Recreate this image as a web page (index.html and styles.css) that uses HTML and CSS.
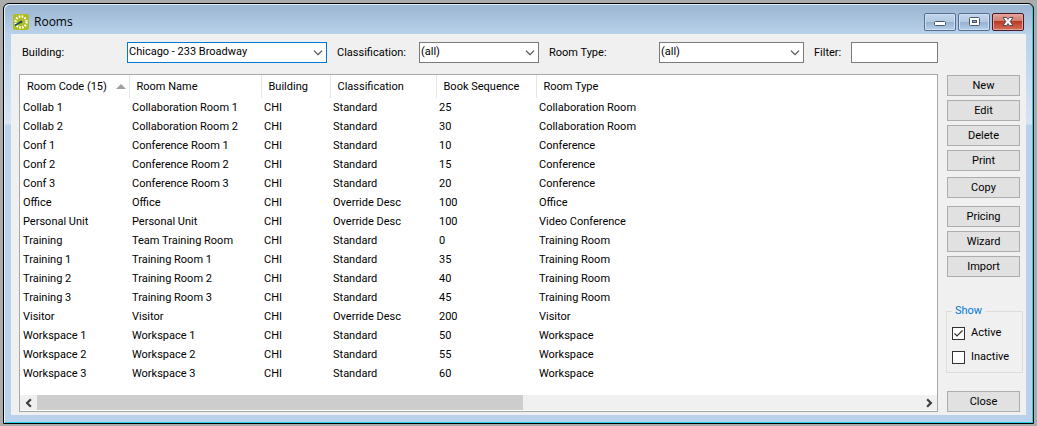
FILE: index.html
```html
<!DOCTYPE html>
<html lang="en">
<head>
<meta charset="utf-8">
<title>Rooms</title>
<link rel="stylesheet" href="styles.css">
</head>
<body>
<main class="window">
  <header class="titlebar">
    <svg class="app-icon" viewBox="0 0 16 16" aria-hidden="true">
      <rect width="16" height="16" rx="2" fill="#aebd24"/>
      <circle cx="8" cy="8" r="5.5" fill="none" stroke="#fff" stroke-width="2.4" stroke-dasharray="1.5 1.38"/>
      <path d="M2 11.5 8.5 7.5" stroke="#16505c" stroke-width="1.6"/>
      <circle cx="8" cy="8" r="1.3" fill="#16505c"/>
    </svg>
    <h1 class="title">Rooms</h1>
    <div class="window-buttons">
      <button class="win-btn" type="button" aria-label="Minimize">
        <svg viewBox="0 0 14 12"><rect x="1.5" y="5.5" width="11" height="4" rx="1" fill="#fff" stroke="#4c5665"/></svg>
      </button>
      <button class="win-btn" type="button" aria-label="Maximize">
        <svg viewBox="0 0 14 12"><rect x="2.5" y="1.5" width="10" height="8" rx="1" fill="#fff" stroke="#4c5665"/><rect x="5.5" y="4.5" width="4" height="2" fill="#8fadd0" stroke="#4c5665"/></svg>
      </button>
      <button class="win-btn win-close" type="button" aria-label="Close window">
        <svg viewBox="0 0 14 12"><path d="M2 1.5h3.5L7 3.4l1.500-1.900H12L9.200 5.500 12 9.500H8.500L7 7.600 5.500 9.500H2L4.800 5.500Z" fill="#fff" stroke="#4d4a58"/></svg>
      </button>
    </div>
  </header>
  <div class="client">
    <form class="filters">
      <label for="building">Building:</label>
      <select id="building" class="field field-active"><option>Chicago - 233 Broadway</option></select>
      <label for="classification">Classification:</label>
      <select id="classification" class="field"><option>(all)</option></select>
      <label for="roomtype" class="label-type">Room Type:</label>
      <select id="roomtype" class="field"><option>(all)</option></select>
      <label for="filter">Filter:</label>
      <input id="filter" class="field" type="text">
    </form>
    <section class="list">
      <table class="rooms">
        <colgroup><col class="c-code"><col class="c-name"><col class="c-building"><col class="c-class"><col class="c-seq"><col></colgroup>
        <thead><tr>
          <th><span class="sorted">Room Code (15)<svg class="sort" viewBox="0 0 10 5" aria-hidden="true"><path d="M0 5 5 0l5 5Z" fill="#a0a0a0"/></svg></span></th>
          <th>Room Name</th><th>Building</th><th>Classification</th><th>Book Sequence</th><th>Room Type</th>
        </tr></thead>
        <tbody>
          <tr><td>Collab 1</td><td>Collaboration Room 1</td><td>CHI</td><td>Standard</td><td>25</td><td>Collaboration Room</td></tr>
          <tr><td>Collab 2</td><td>Collaboration Room 2</td><td>CHI</td><td>Standard</td><td>30</td><td>Collaboration Room</td></tr>
          <tr><td>Conf 1</td><td>Conference Room 1</td><td>CHI</td><td>Standard</td><td>10</td><td>Conference</td></tr>
          <tr><td>Conf 2</td><td>Conference Room 2</td><td>CHI</td><td>Standard</td><td>15</td><td>Conference</td></tr>
          <tr><td>Conf 3</td><td>Conference Room 3</td><td>CHI</td><td>Standard</td><td>20</td><td>Conference</td></tr>
          <tr><td>Office</td><td>Office</td><td>CHI</td><td>Override Desc</td><td>100</td><td>Office</td></tr>
          <tr><td>Personal Unit</td><td>Personal Unit</td><td>CHI</td><td>Override Desc</td><td>100</td><td>Video Conference</td></tr>
          <tr><td>Training</td><td>Team Training Room</td><td>CHI</td><td>Standard</td><td>0</td><td>Training Room</td></tr>
          <tr><td>Training 1</td><td>Training Room 1</td><td>CHI</td><td>Standard</td><td>35</td><td>Training Room</td></tr>
          <tr><td>Training 2</td><td>Training Room 2</td><td>CHI</td><td>Standard</td><td>40</td><td>Training Room</td></tr>
          <tr><td>Training 3</td><td>Training Room 3</td><td>CHI</td><td>Standard</td><td>45</td><td>Training Room</td></tr>
          <tr><td>Visitor</td><td>Visitor</td><td>CHI</td><td>Override Desc</td><td>200</td><td>Visitor</td></tr>
          <tr><td>Workspace 1</td><td>Workspace 1</td><td>CHI</td><td>Standard</td><td>50</td><td>Workspace</td></tr>
          <tr><td>Workspace 2</td><td>Workspace 2</td><td>CHI</td><td>Standard</td><td>55</td><td>Workspace</td></tr>
          <tr><td>Workspace 3</td><td>Workspace 3</td><td>CHI</td><td>Standard</td><td>60</td><td>Workspace</td></tr>
        </tbody>
      </table>
      <div class="scrollbar">
        <button class="arrow" type="button" aria-label="Scroll left"><svg viewBox="0 0 8 8"><path d="M5.500 1 2.500 4l3 3" fill="none" stroke="#404040" stroke-width="1.8"/></svg></button>
        <div class="track"><div class="thumb"></div></div>
        <button class="arrow" type="button" aria-label="Scroll right"><svg viewBox="0 0 8 8"><path d="M2.500 1l3 3-3 3" fill="none" stroke="#404040" stroke-width="1.8"/></svg></button>
      </div>
    </section>
    <aside class="side">
      <div class="actions">
        <button class="btn" type="button">New</button>
        <button class="btn" type="button">Edit</button>
        <button class="btn" type="button">Delete</button>
        <button class="btn" type="button">Print</button>
      </div>
      <div class="actions">
        <button class="btn" type="button">Copy</button>
      </div>
      <div class="actions actions-tools">
        <button class="btn" type="button">Pricing</button>
        <button class="btn" type="button">Wizard</button>
        <button class="btn" type="button">Import</button>
      </div>
      <fieldset class="show">
        <legend>Show</legend>
        <label class="check"><input type="checkbox" checked>Active</label>
        <label class="check"><input type="checkbox">Inactive</label>
      </fieldset>
      <button class="btn" type="button">Close</button>
    </aside>
  </div>
</main>
</body>
</html>
```

FILE: styles.css
```css
* { box-sizing: border-box; }
body {
  margin: 0;
  min-height: 100vh;
  padding: 3px 3px 2px;
  display: flex;
  background: #ababab;
  font: 11px/14px Roboto, "Liberation Sans", sans-serif;
  color: #000;
}
button, input, select { font: inherit; color: inherit; }
.window {
  flex: 1;
  display: flex;
  flex-direction: column;
  padding: 0 7px 8px;
  border: 1px solid #000;
  border-radius: 6px 6px 0 0;
  background: linear-gradient(#99b4d1, #b9d1ea 30px, #d7e5f5 120px, #b9d1ea 121px);
  box-shadow: inset 1px 1px #e8f2fb, inset -1px -1px #22d3ee;
}
.titlebar {
  display: flex;
  align-items: center;
  gap: 5px;
  height: 30px;
  padding: 6px 2px 0;
}
.app-icon { width: 16px; height: 16px; }
.title { flex: 1; margin: 0; font: 12px/16px "Open Sans", "Noto Sans", sans-serif; }
.window-buttons { display: flex; gap: 2px; }
.win-btn {
  width: 32px;
  height: 18px;
  padding: 0;
  display: grid;
  place-items: center;
  border: 1px solid #566f91;
  border-radius: 2px;
  background: linear-gradient(#c3d6eb, #b1c9e3 50%, #97b2d1 51%, #b4cfea);
  box-shadow: inset 0 0 0 1px #cfe0f2;
}
.win-btn svg { width: 14px; height: 12px; }
.win-close {
  border-color: #4a1728;
  background: linear-gradient(#e5a59b, #d17a6b 45%, #b93a25 46%, #d4705a);
  box-shadow: inset 0 0 0 1px #e5a79c;
}
.client {
  flex: 1;
  display: grid;
  grid-template-columns: 1fr 77px;
  grid-template-rows: auto 1fr;
  gap: 11px 8px;
  padding: 8px 3px 3px 8px;
  background: #f0f0f0;
}
.filters {
  display: grid;
  grid-template-columns: 105px 200fr 92px 120fr 120px 145fr 47px 87fr;
  align-items: center;
  padding-left: 3px;
}
.filters label:not(:first-child) { padding-left: 10px; }
.filters .label-type { padding-left: 13px; }
.field {
  width: 100%;
  min-width: 0;
  height: 21px;
  margin: 0;
  padding: 0 4px 2px 1px;
  border: 1px solid #7a7a7a;
  border-radius: 0;
  outline: 0;
  background: #fff;
}
select.field {
  appearance: none;
  background: #fff url("data:image/svg+xml,%3Csvg xmlns='http://www.w3.org/2000/svg' width='10' height='6'%3E%3Cpath d='M1 .7l4 4 4-4' fill='none' stroke='%23505050' stroke-width='1.2'/%3E%3C/svg%3E") no-repeat right 3px center;
}
.field.field-active { border-color: #0078d7; }
.list {
  grid-row: 2;
  display: flex;
  flex-direction: column;
  justify-content: space-between;
  border: 1px solid #a5a7ab;
  padding-bottom: 1px;
  background: #fff;
}
.rooms { width: 100%; table-layout: fixed; border-collapse: collapse; }
.c-code { width: 109px; }
.c-name { width: 132px; }
.c-building { width: 69px; }
.c-class { width: 106px; }
.c-seq { width: 100px; }
th {
  height: 23px;
  padding: 0 3px 0 7px;
  border-right: 1px solid #e5e5e5;
  font-weight: 400;
  text-align: left;
}
th:last-child { border-right: 0; }
.sorted { display: flex; align-items: center; justify-content: space-between; }
.sort { width: 10px; height: 5px; }
td { height: 19px; padding: 0 0 0 3px; white-space: nowrap; }
.scrollbar { display: flex; height: 15px; background: #f0f0f0; }
.arrow {
  width: 17px;
  padding: 0;
  display: grid;
  place-items: center;
  border: 0;
  background: none;
}
.arrow svg { width: 10px; height: 10px; }
.track { flex: 1; }
.thumb { width: 55%; height: 100%; background: #cdcdcd; }
.side {
  grid-row: 2;
  grid-column: 2;
  display: flex;
  flex-direction: column;
  gap: 6px;
  padding-top: 1px;
}
.actions { display: flex; flex-direction: column; gap: 4px; }
.actions-tools { margin-top: 2px; }
.btn {
  width: 73px;
  height: 21px;
  margin-left: 1px;
  padding: 0;
  border: 1px solid #adadad;
  background: #e1e1e1;
}
.show {
  min-width: 0;
  margin: auto 0 12px;
  padding: 8px 5px;
  border: 1px solid #dcdcdc;
  display: flex;
  flex-direction: column;
  gap: 10px;
}
.show legend { padding: 0 3px; color: #0078d7; }
.check { display: flex; align-items: center; gap: 6px; }
.check input {
  appearance: none;
  width: 13px;
  height: 13px;
  margin: 0;
  border: 1px solid #333;
  background: #fff;
}
.check input:checked {
  background: #fff url("data:image/svg+xml,%3Csvg xmlns='http://www.w3.org/2000/svg' width='11' height='11'%3E%3Cpath d='M1.500 5.500l2.500 2.500 5.500-5.500' fill='none' stroke='%23333' stroke-width='1.2'/%3E%3C/svg%3E") center no-repeat;
}
```
